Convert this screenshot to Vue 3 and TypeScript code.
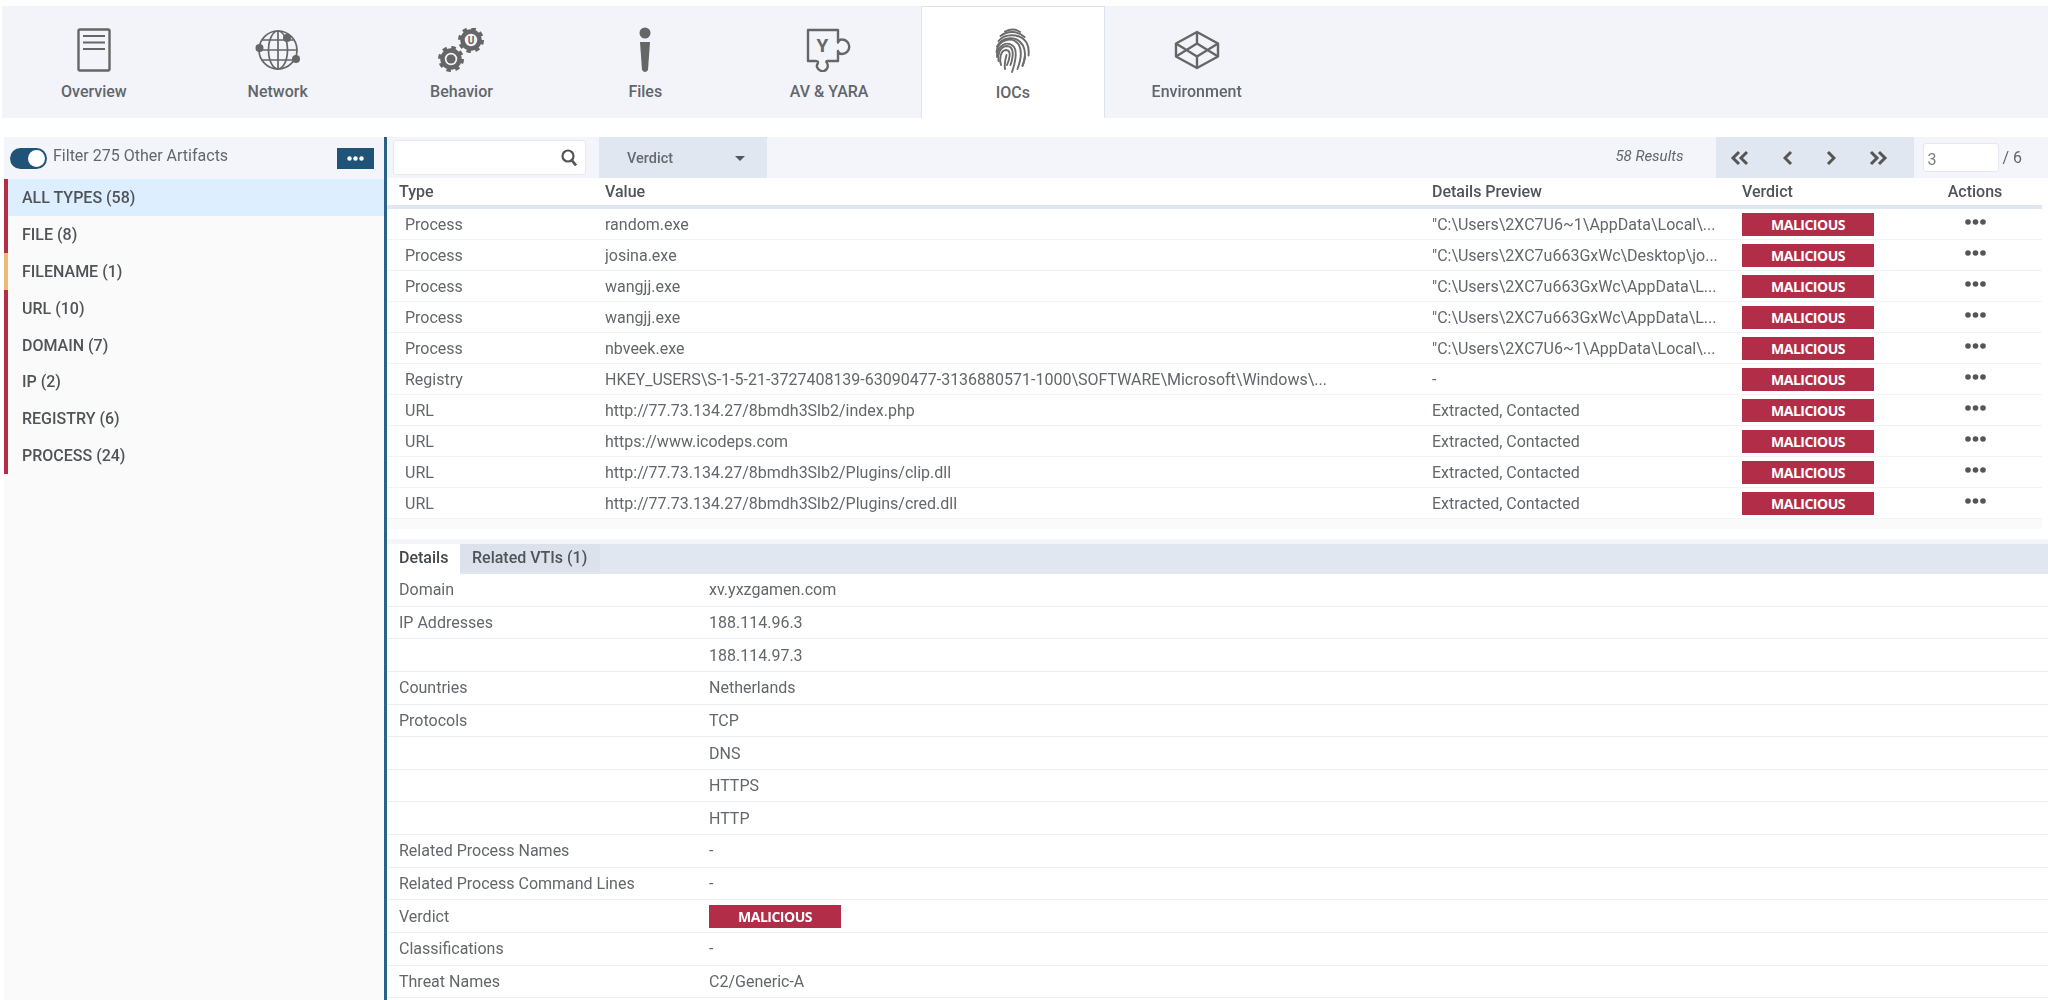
<script setup lang="ts">
const tabs = ['Overview', 'Network', 'Behavior', 'Files', 'AV & YARA', 'IOCs', 'Environment']
const types = [
  { label: 'ALL TYPES (58)', tone: 'red', active: true },
  { label: 'FILE (8)', tone: 'red', active: false },
  { label: 'FILENAME (1)', tone: 'amber', active: false },
  { label: 'URL (10)', tone: 'red', active: false },
  { label: 'DOMAIN (7)', tone: 'red', active: false },
  { label: 'IP (2)', tone: 'red', active: false },
  { label: 'REGISTRY (6)', tone: 'red', active: false },
  { label: 'PROCESS (24)', tone: 'red', active: false },
]
const rows = [
  ['Process', 'random.exe', '"C:\\Users\\2XC7U6~1\\AppData\\Local\\...'],
  ['Process', 'josina.exe', '"C:\\Users\\2XC7u663GxWc\\Desktop\\jo...'],
  ['Process', 'wangjj.exe', '"C:\\Users\\2XC7u663GxWc\\AppData\\L...'],
  ['Process', 'wangjj.exe', '"C:\\Users\\2XC7u663GxWc\\AppData\\L...'],
  ['Process', 'nbveek.exe', '"C:\\Users\\2XC7U6~1\\AppData\\Local\\...'],
  ['Registry', 'HKEY_USERS\\S-1-5-21-3727408139-63090477-3136880571-1000\\SOFTWARE\\Microsoft\\Windows\\...', '-'],
  ['URL', 'http://77.73.134.27/8bmdh3Slb2/index.php', 'Extracted, Contacted'],
  ['URL', 'https://www.icodeps.com', 'Extracted, Contacted'],
  ['URL', 'http://77.73.134.27/8bmdh3Slb2/Plugins/clip.dll', 'Extracted, Contacted'],
  ['URL', 'http://77.73.134.27/8bmdh3Slb2/Plugins/cred.dll', 'Extracted, Contacted'],
]
const details = [
  ['Domain', 'xv.yxzgamen.com'],
  ['IP Addresses', '188.114.96.3'],
  ['', '188.114.97.3'],
  ['Countries', 'Netherlands'],
  ['Protocols', 'TCP'],
  ['', 'DNS'],
  ['', 'HTTPS'],
  ['', 'HTTP'],
  ['Related Process Names', '-'],
  ['Related Process Command Lines', '-'],
  ['Verdict', '@badge'],
  ['Classifications', '-'],
  ['Threat Names', 'C2/Generic-A'],
]
</script>

<template>
  <div class="page">
    <nav class="tabs">
      <div v-for="(t, i) in tabs" :key="t" class="tab" :class="{ on: t === 'IOCs' }">
        <div class="icon">
          <svg v-if="i === 0" width="34" height="44" viewBox="0 0 34 44" fill="none" stroke="#666">
            <rect x="1.500" y="1.500" width="31" height="41" rx="1.500" stroke-width="2.400" />
            <path d="M6 8h22M6 14.500h22M6 21h22" stroke-width="2.200" />
          </svg>
          <svg v-else-if="i === 1" width="46" height="44" viewBox="0 0 46 44" fill="none" stroke="#666">
            <g stroke-width="1.700">
              <circle cx="23" cy="22" r="19" />
              <ellipse cx="23" cy="22" rx="9.500" ry="19" />
              <path d="M23 3v38M4 22h38M7 12h32M7 32h32" />
            </g>
            <g fill="#666" stroke="none">
              <circle cx="4.500" cy="20" r="4" />
              <circle cx="32" cy="10" r="4" />
              <circle cx="41" cy="31" r="4" />
            </g>
          </svg>
          <svg v-else-if="i === 2" width="46" height="44" viewBox="0 0 46 44" fill="none" stroke="#666">
            <g>
              <circle cx="13" cy="31" r="8.500" stroke-width="4.500" />
              <circle cx="13" cy="31" r="11.500" stroke-width="3" stroke-dasharray="4.500 4.530" />
              <circle cx="13" cy="31" r="4.500" fill="#666" stroke="none" />
            </g>
            <g>
              <circle cx="33" cy="12" r="8.500" stroke-width="4.500" />
              <circle cx="33" cy="12" r="11.500" stroke-width="3" stroke-dasharray="4.500 4.530" />
              <text x="33" y="15.500" text-anchor="middle" class="u" fill="#666" stroke="none">U</text>
            </g>
          </svg>
          <svg v-else-if="i === 3" width="14" height="46" viewBox="0 0 14 46" fill="#666">
            <circle cx="7" cy="6" r="5.500" />
            <path d="M2 15h10l-2 28q-3 4-6 0z" />
          </svg>
          <svg v-else-if="i === 4" width="46" height="44" viewBox="0 0 46 44" fill="none" stroke="#666" stroke-width="2.400">
            <path d="M2 2h30v12.500a4 4 0 0 1 4-3a7 7 0 0 1 0 14.500a4 4 0 0 1-4-3V33H22c-2 0-2 1-1 2a5.500 5.500 0 0 1-3 8a6.500 6.500 0 0 1-7-4c-.8-2 1-3 1-4.500c0-1.500-1-1.500-3-1.500H2z" stroke-linejoin="round" />
            <text x="16.500" y="24" text-anchor="middle" class="y" fill="#666" stroke="none">Y</text>
          </svg>
          <svg v-else-if="i === 5" width="36" height="46" viewBox="0 0 36 46" fill="none" stroke="#6c6c6c" stroke-width="1.900" stroke-linecap="round">
            <path d="M10 3.500c5-2.500 11-2.500 15 .5" />
            <path d="M5.500 8c7-5.500 17-5.500 24 1" />
            <path d="M3.500 13c6-7.500 21-8.500 28 1.500c2.500 4.500 2.500 9 2 13" />
            <path d="M2 18.500c5-10 20-11.500 26-1c3 6 2 14-.5 20" />
            <path d="M1.500 24c1-12 16-17 22.500-7c3 6 1.500 16-1.500 24" />
            <path d="M2 29c-.5-12 11-17 17-10c3.500 5 1 17-2 25" />
            <path d="M3.500 33c-1-7 1-14 8-15c8 0 7 10 4 19" />
            <path d="M6 37c-2-5-.5-15 5-15c6 .5 3.500 9 1 15" />
            <path d="M10 41c-1-5 .5-10 1.500-14" />
            <path d="M30 29c-.5 3-1 6-2.500 9" />
          </svg>
          <svg v-else width="46" height="40" viewBox="0 0 46 40" fill="none" stroke="#666" stroke-width="2.400" stroke-linejoin="round">
            <path d="M23 2 44 13.500v13L23 38 2 26.500v-13z" />
            <path d="M23 2v11.500M23 26.500V38M2 13.500l21 13 21-13M2 26.500l21-13 21 13" />
          </svg>
        </div>
        <span>{{ t }}</span>
      </div>
      <div class="tab-rest" />
    </nav>

    <main class="main">
      <aside class="side">
        <div class="filter">
          <span class="toggle"><i /></span>
          <span class="filter-text">Filter 275 Other Artifacts</span>
          <button class="more" aria-label="More">
            <svg width="17" height="5" viewBox="0 0 17 5" fill="#fff"><circle cx="2.500" cy="2.500" r="2.200" /><circle cx="8.500" cy="2.500" r="2.200" /><circle cx="14.500" cy="2.500" r="2.200" /></svg>
          </button>
        </div>
        <ul class="types">
          <li v-for="t in types" :key="t.label" :class="[t.tone, { active: t.active }]">{{ t.label }}</li>
        </ul>
      </aside>

      <section class="content">
        <div class="toolbar">
          <div class="search">
            <svg width="16" height="18" viewBox="0 0 16 18" fill="none" stroke="#555" stroke-width="2.200">
              <circle cx="7" cy="7" r="5.500" />
              <path d="m11 11.500 4 5" stroke-width="2.800" />
            </svg>
          </div>
          <div class="dropdown"><span>Verdict</span><b /></div>
          <span class="results">58 Results</span>
          <div class="pager">
            <svg width="20" height="16" viewBox="0 0 20 16" fill="none" stroke="#555" stroke-width="3"><path d="M9 2 3 8l6 6M17 2l-6 6 6 6" /></svg>
            <svg width="10" height="16" viewBox="0 0 10 16" fill="none" stroke="#555" stroke-width="3"><path d="M8 2 2 8l6 6" /></svg>
            <svg width="10" height="16" viewBox="0 0 10 16" fill="none" stroke="#555" stroke-width="3"><path d="m2 2 6 6-6 6" /></svg>
            <svg width="20" height="16" viewBox="0 0 20 16" fill="none" stroke="#555" stroke-width="3"><path d="m3 2 6 6-6 6M11 2l6 6-6 6" /></svg>
          </div>
          <div class="page-input">3</div>
          <span class="page-total">/ 6</span>
        </div>

        <div class="table">
          <div class="row head">
            <span class="c-type">Type</span>
            <span class="c-value">Value</span>
            <span class="c-detail">Details Preview</span>
            <span class="c-verdict">Verdict</span>
            <span class="c-actions">Actions</span>
          </div>
          <div v-for="(r, i) in rows" :key="i" class="row body">
            <span class="c-type">{{ r[0] }}</span>
            <span class="c-value">{{ r[1] }}</span>
            <span class="c-detail">{{ r[2] }}</span>
            <span class="c-verdict"><em class="badge">MALICIOUS</em></span>
            <span class="c-actions">
              <svg class="dots" width="21" height="6" viewBox="0 0 21 6" fill="#555"><circle cx="3" cy="3" r="2.800" /><circle cx="10.500" cy="3" r="2.800" /><circle cx="18" cy="3" r="2.800" /></svg>
            </span>
          </div>
          <div class="scroll" />
        </div>

        <div class="detail-tabs">
          <span class="dt on">Details</span>
          <span class="dt">Related VTIs (1)</span>
        </div>
        <div class="details">
          <div v-for="(d, i) in details" :key="i" class="d-row">
            <span class="d-label">{{ d[0] }}</span>
            <em v-if="d[1] === '@badge'" class="badge">MALICIOUS</em>
            <span v-else>{{ d[1] }}</span>
          </div>
        </div>
      </section>
    </main>
  </div>
</template>

<style>
html, body { margin: 0; background: #fff; }
</style>

<style scoped>
.page {
  width: 2048px;
  height: 1000px;
  overflow: hidden;
  padding-top: 6px;
  box-sizing: border-box;
  font-family: Roboto, sans-serif;
  font-size: 16px;
  color: #63676b;
  filter: blur(0.35px);
}
.tabs {
  display: flex;
  height: 112px;
  margin-left: 2px;
  background: #f3f4fa;
}
.tab {
  width: 183.800px;
  box-sizing: border-box;
  display: flex;
  flex-direction: column;
  align-items: center;
  font-weight: 500;
  color: #62666a;
}
.tab.on {
  background: #fff;
  border: 1px solid #dde4ef;
  border-bottom: 0;
}
.tab-rest { flex: 1; }
.icon {
  height: 46px;
  margin-top: 21px;
  margin-bottom: 9px;
  display: flex;
  align-items: center;
  justify-content: center;
}
.u { font: 700 10px Roboto, sans-serif; }
.y { font: 700 19px Roboto, sans-serif; }

.main {
  display: flex;
  margin-top: 19px;
  margin-left: 4px;
  height: 863px;
}
.side {
  width: 380px;
  flex: none;
  border-right: 3px solid #2a6286;
  background: #fafafa;
}
.filter {
  height: 42px;
  background: #f3f5fa;
  display: flex;
  align-items: center;
  padding: 0 10px 0 6px;
}
.toggle {
  width: 37px;
  height: 21px;
  border-radius: 11px;
  background: #1f5377;
  position: relative;
  flex: none;
}
.toggle i {
  position: absolute;
  right: 2px;
  top: 2px;
  width: 17px;
  height: 17px;
  border-radius: 50%;
  background: #fff;
}
.filter-text { margin-left: 6px; flex: 1; margin-bottom: 5px; }
.more {
  width: 37px;
  height: 21px;
  border: 0;
  padding: 0;
  background: #1f5377;
  display: flex;
  align-items: center;
  justify-content: center;
}
.types { list-style: none; margin: 0; padding: 0; }
.types li {
  height: 36.900px;
  line-height: 38px;
  padding-left: 14px;
  border-left: 4px solid #b22d47;
  font-weight: 500;
  color: #505458;
}
.types li.amber { border-left-color: #eeb878; }
.types li.active { background: #ddeeff; }

.content { flex: 1; min-width: 0; display: flex; flex-direction: column; }
.toolbar {
  height: 41px;
  flex: none;
  background: #f3f5fa;
  display: flex;
  align-items: center;
  padding-left: 6px;
}
.search {
  width: 193px;
  height: 35px;
  box-sizing: border-box;
  background: #fff;
  border: 1px solid #e4e8f0;
  border-radius: 3px;
  display: flex;
  align-items: center;
  justify-content: flex-end;
  padding-right: 8px;
}
.dropdown {
  width: 168px;
  height: 41px;
  margin-left: 13px;
  background: #e1e7f0;
  display: flex;
  align-items: center;
  padding: 2px 0 0 28px;
  box-sizing: border-box;
  font-size: 14.500px;
  font-weight: 500;
  color: #666a6e;
}
.dropdown b {
  margin-left: 62px;
  border: 5px solid transparent;
  border-top-color: #555;
  border-bottom: 0;
}
.results {
  margin-left: auto;
  margin-right: 33px;
  margin-bottom: 4px;
  font-style: italic;
  font-size: 15px;
}
.pager {
  width: 198px;
  height: 41px;
  background: #e1e7f0;
  display: flex;
  align-items: center;
  justify-content: space-between;
  padding: 0 26px 0 14px;
  box-sizing: border-box;
}
.page-input {
  width: 76px;
  height: 29px;
  margin-left: 9px;
  box-sizing: border-box;
  background: #fff;
  border: 1px solid #e4e8f0;
  border-radius: 3px;
  padding-left: 3px;
  line-height: 31px;
  color: #7a7e82;
}
.page-total { margin-left: 3px; margin-right: 26px; }

.table { margin-right: 6px; }
.row { display: flex; align-items: center; }
.row > span { display: block; white-space: nowrap; }
.head {
  height: 27px;
  font-weight: 500;
  color: #505458;
  border-bottom: 4px solid #e1e7f0;
}
.body { height: 30px; border-bottom: 1px solid #f1f3f7; }
.c-type { width: 218px; padding-left: 18px; box-sizing: border-box; flex: none; }
.c-value { width: 827px; flex: none; overflow: hidden; }
.c-detail { width: 310px; flex: none; overflow: hidden; }
.row > .c-verdict { width: 189px; flex: none; display: flex; }
.row > .c-actions { width: 88px; flex: none; display: flex; justify-content: center; }
.dots { margin-bottom: 4px; }
.head .c-type { padding-left: 12px; }
.badge {
  display: block;
  width: 132px;
  height: 23px;
  line-height: 23px;
  text-align: center;
  background: #b22d47;
  color: #fff;
  font-style: normal;
  font-family: "Open Sans", sans-serif;
  font-size: 14px;
  font-weight: 700;
  letter-spacing: -0.5px;
}
.scroll { height: 10px; background: #fafafa; }

.detail-tabs {
  height: 30px;
  margin-top: 10px;
  border-top: 5px solid #f3f5fa;
  flex: none;
  background: #e1e7f0;
  display: flex;
  align-items: stretch;
  font-weight: 500;
  color: #505458;
}
.dt { padding-top: 4px; box-sizing: border-box; }
.dt.on { background: #fff; width: 73px; padding-left: 12px; color: #44484c; }
.dt:not(.on) { background: #dbe2ec; width: 140px; padding-left: 12px; height: 28px; }
.d-row {
  height: 31.650px;
  display: flex;
  align-items: center;
  border-bottom: 1px solid #e9edf4;
}
.d-label { width: 322px; padding-left: 12px; box-sizing: border-box; flex: none; }
</style>
